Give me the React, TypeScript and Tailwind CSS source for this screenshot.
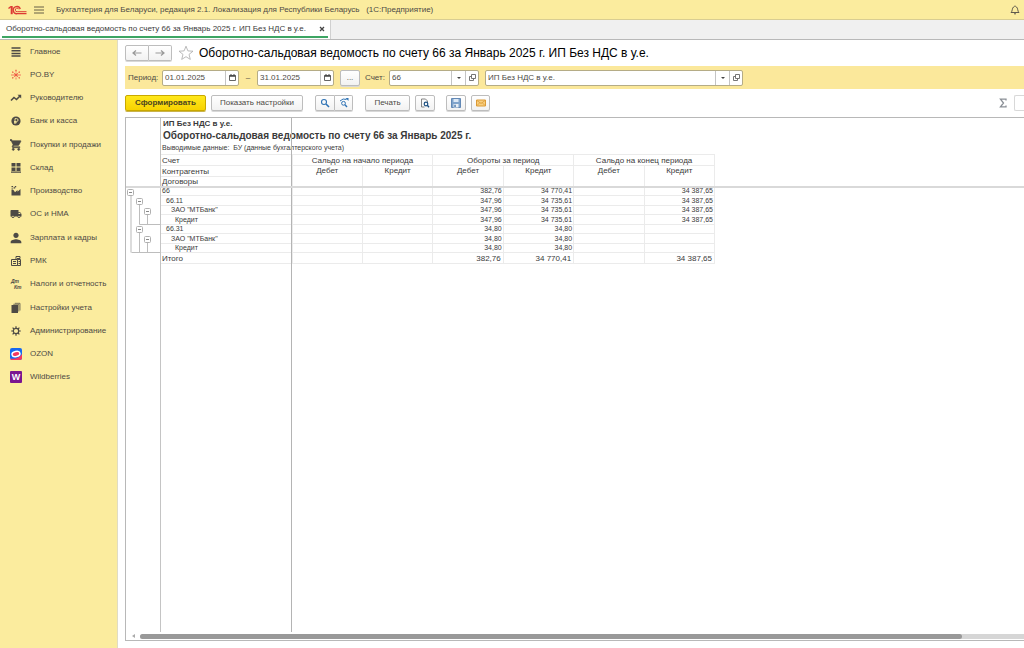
import { useState } from 'react';
import type { ReactNode } from 'react';
import { MdLocalShipping, MdPerson, MdShoppingCart } from 'react-icons/md';

interface Seccion {
  nombre: string;
  icono: ReactNode;
}

interface Fila {
  cuenta: string;
  sangria: string;
  valores: string[];
}

const secciones: Seccion[] = [
  {
    nombre: 'Главное',
    icono: (
      <svg viewBox="0 0 12 12" className="size-3">
        <path d="M1.500 2h9M1.500 4.700h9M1.500 7.400h9M1.500 10h9" stroke="#4d4a45" strokeWidth="1.500" />
      </svg>
    ),
  },
  {
    nombre: 'PO.BY',
    icono: (
      <svg viewBox="0 0 12 12" className="size-3">
        <path d="M6 3.500v-2M6 8.500v2M1 6h10M3.600 3.600l4.800 4.800M8.400 3.600L3.600 8.400" stroke="#f0705a" strokeWidth=".9" />
        <circle cx="6" cy="6" r="1.400" fill="#ee5a42" />
        <path d="M2 2.500h1.300v1.200H2zM8.700 2.500H10v1.200H8.700zM2 8.300h1.300v1.200H2zM8.700 8.300H10v1.200H8.700zM5.400.800h1.200V2H5.400z" fill="#ee5a42" />
      </svg>
    ),
  },
  {
    nombre: 'Руководителю',
    icono: (
      <svg viewBox="0 0 12 12" className="size-3" fill="none" stroke="#4d4a45">
        <path d="M1 8.500l3-3 2.500 2L10 4" strokeWidth="1.600" />
        <path d="M7.500 2.800h3.700v3.700z" fill="#4d4a45" stroke="none" />
      </svg>
    ),
  },
  {
    nombre: 'Банк и касса',
    icono: (
      <svg viewBox="0 0 12 12" className="size-3">
        <circle cx="6" cy="6" r="4.600" fill="#4d4a45" />
        <path d="M5 9V3.600h1.600a1.400 1.400 0 0 1 0 2.900H4M4 7.700h2.800" fill="none" stroke="#fbec9e" strokeWidth=".9" />
      </svg>
    ),
  },
  {
    nombre: 'Покупки и продажи',
    icono: <MdShoppingCart viewBox="1 1 22 22" className="size-3" stroke="#4d4a45" strokeWidth="1" />,
  },
  {
    nombre: 'Склад',
    icono: (
      <svg viewBox="0 0 12 12" className="size-3" fill="#4d4a45">
        <path d="M1.500 1h4v3.600h-4zM6.500 1h4v3.600h-4zM1.500 5.400h4V9h-4zM6.500 5.400h4V9h-4zM1 9.600h10v1.200H1z" />
      </svg>
    ),
  },
  {
    nombre: 'Производство',
    icono: (
      <svg viewBox="0 0 12 12" className="size-3" fill="#4d4a45">
        <path d="M1.500 10.500V5h2L5 7.200l2.500-2.200v1.800L10.500 4v6.500z" />
        <path d="M1.500 1h1.600v1.300H1.500zM3.600 2.300h1.600v1.300H3.600zM1.500 3.400h1.600v1H1.500zM4.800 1h1.400v1.200H4.800z" />
      </svg>
    ),
  },
  {
    nombre: 'ОС и НМА',
    icono: (
      <svg viewBox="0 0 24 24" className="size-3">
        <MdLocalShipping size={24} />
      </svg>
    ),
  },
  {
    nombre: 'Зарплата и кадры',
    icono: <MdPerson viewBox="3 3 18 18" className="size-3" />,
  },
  {
    nombre: 'РМК',
    icono: (
      <svg viewBox="0 0 12 12" className="size-3" fill="none" stroke="#4d4a45">
        <path d="M1.500 4.500h6v6h-6zM7.500 4.500h3v6h-3" />
        <path d="M3 6.500h3M3 8.500h3M6 4V1.500h4v2H7M8.500 6.500h1.500M8.500 8.500h1.500" />
      </svg>
    ),
  },
  {
    nombre: 'Налоги и отчетность',
    icono: (
      <svg viewBox="0 0 12 12" className="size-3" fill="#4d4a45" fontFamily="Liberation Sans, sans-serif" fontStyle="italic" fontWeight="bold" fontSize="5">
        <text x="1" y="5">Дт</text>
        <text x="4" y="11">Кт</text>
      </svg>
    ),
  },
  {
    nombre: 'Настройки учета',
    icono: (
      <svg viewBox="0 0 12 12" className="size-3" fill="#4d4a45">
        <path d="M1.500 3h6.500v8H1.500z" />
        <path d="M3.300 2.300h5.500V9.500M4.800 1.300h5.200V8.500" fill="none" stroke="#4d4a45" strokeWidth=".7" />
      </svg>
    ),
  },
  {
    nombre: 'Администрирование',
    icono: (
      <svg viewBox="0 0 12 12" className="size-3" fill="none" stroke="#4d4a45">
        <circle cx="6" cy="6" r="2.700" strokeWidth="1.200" />
        <path d="M6 1.200v2M6 8.800v2M1.200 6h2M8.800 6h2M2.600 2.600l1.400 1.400M8 8l1.400 1.400M2.600 9.400L4 8M8 4l1.400-1.400" strokeWidth="1.200" />
      </svg>
    ),
  },
  {
    nombre: 'OZON',
    icono: (
      <svg viewBox="0 0 12 12" className="size-3">
        <rect width="12" height="12" rx="2" fill="#1668f0" />
        <path d="M0 10.500Q8 12 12 6v4a2 2 0 0 1-2 2H2a2 2 0 0 1-2-1.500z" fill="#f5375f" />
        <ellipse cx="6" cy="6" rx="4" ry="2.600" fill="#f5375f" stroke="#fff" strokeWidth="1.500" transform="rotate(-12 6 6)" />
      </svg>
    ),
  },
  {
    nombre: 'Wildberries',
    icono: (
      <svg viewBox="0 0 12 12" className="size-3">
        <rect width="12" height="12" rx="1" fill="#7a1590" />
        <text x="6" y="9" textAnchor="middle" fill="#fff" fontFamily="Liberation Sans, sans-serif" fontWeight="bold" fontSize="9">W</text>
      </svg>
    ),
  },
];

const filas: Fila[] = [
  { cuenta: '66', sangria: 'pl-px', valores: ['', '', '382,76', '34 770,41', '', '34 387,65'] },
  { cuenta: '66.11', sangria: 'pl-[5px]', valores: ['', '', '347,96', '34 735,61', '', '34 387,65'] },
  { cuenta: 'ЗАО "МТБанк"', sangria: 'pl-[10px]', valores: ['', '', '347,96', '34 735,61', '', '34 387,65'] },
  { cuenta: 'Кредит', sangria: 'pl-[14px]', valores: ['', '', '347,96', '34 735,61', '', '34 387,65'] },
  { cuenta: '66.31', sangria: 'pl-[5px]', valores: ['', '', '34,80', '34,80', '', ''] },
  { cuenta: 'ЗАО "МТБанк"', sangria: 'pl-[10px]', valores: ['', '', '34,80', '34,80', '', ''] },
  { cuenta: 'Кредит', sangria: 'pl-[14px]', valores: ['', '', '34,80', '34,80', '', ''] },
];

const totales = ['', '', '382,76', '34 770,41', '', '34 387,65'];

const boton =
  'flex h-4 shrink-0 items-center justify-center rounded-xs border border-[#bdbdbd] bg-linear-to-b from-white to-[#f2f2f2] shadow-[0_1px_0_#d8d8d8]';
const campo = 'flex h-4 overflow-hidden rounded-xs border border-[#b5ac86] bg-white';
const botonCampo = 'flex shrink-0 items-center justify-center border-l border-[#c4c4c4]';

function Calendario() {
  return (
    <svg viewBox="0 0 7 7" className="size-[7px]" fill="none" stroke="#666">
      <path d="M.5 1.500h6v5h-6z" />
      <path d="M.5 2h6" strokeWidth="1.500" stroke="#444" />
      <path d="M2 0v1.500M5 0v1.500" stroke="#444" />
    </svg>
  );
}

function Abrir() {
  return (
    <svg viewBox="0 0 8 8" className="size-2" fill="none" stroke="#666" strokeWidth=".9">
      <path d="M3.500.5h4v4h-4zM3.500 2.500h-2v4h4v-2" />
    </svg>
  );
}

function CampoFecha({ etiqueta, inicial }: { etiqueta: string; inicial: string }) {
  const [valor, setValor] = useState(inicial);
  return (
    <div className={`${campo} w-[77px]`}>
      <input aria-label={etiqueta} value={valor} onChange={(e) => setValor(e.target.value)} className="min-w-0 flex-1 pl-0.5 outline-none" />
      <button aria-label="Выбрать дату" className={`${botonCampo} w-[13px]`}>
        <Calendario />
      </button>
    </div>
  );
}

function CampoLista({ id, etiqueta, inicial, ancho }: { id: string; etiqueta?: string; inicial: string; ancho: string }) {
  const [valor, setValor] = useState(inicial);
  return (
    <div className={`${campo} ${ancho}`}>
      <input id={id} aria-label={etiqueta} value={valor} onChange={(e) => setValor(e.target.value)} className="min-w-0 flex-1 pl-0.5 outline-none" />
      <button aria-label="Выбрать" className={`${botonCampo} w-3.5`}>
        <svg viewBox="0 0 4 2" className="h-0.5 w-1">
          <path d="M0 0h4L2 2z" fill="#444" />
        </svg>
      </button>
      <button aria-label="Открыть" className={`${botonCampo} w-[13px]`}>
        <Abrir />
      </button>
    </div>
  );
}

function Cabecera() {
  return (
    <header className="flex h-5 shrink-0 items-center border-b border-[#d8cd92] bg-[#fbec9e] pl-2 pr-1">
      <svg viewBox="0 0 20 10" className="h-2.5 w-5" fill="none" stroke="#dd3a33">
        <path d="M.5 3.500L3 1.500" strokeWidth="1.400" />
        <path d="M3.700 1v8.200" strokeWidth="2" />
        <path d="M12.300 4A3.600 3.600 0 1 0 9.300 8.700H18.500" strokeWidth="1.300" />
        <path d="M10.800 4.300A1.800 1.800 0 1 0 9.300 6.700H18.500" strokeWidth="1" />
      </svg>
      <button aria-label="Главное меню" className="ml-1.5">
        <svg viewBox="0 0 10 8" className="h-2 w-2.5">
          <path d="M0 1h10M0 4h10M0 7h10" stroke="#55503c" strokeWidth=".9" />
        </svg>
      </button>
      <p className="ml-3 flex-1 whitespace-pre">Бухгалтерия для Беларуси, редакция 2.1. Локализация для Республики Беларусь   (1С:Предприятие)</p>
      <button aria-label="Оповещения">
        <svg viewBox="0 0 10 10" className="size-2.5" fill="none" stroke="#4d4a45" strokeWidth=".9">
          <path d="M1 7.500C2.500 6.500 2 3 3.500 2 4 1.500 4.500 1.500 5 .8c.5.700 1 .7 1.500 1.200C8 3 7.500 6.500 9 7.500zM4 8.500q1 1.200 2 0" />
        </svg>
      </button>
    </header>
  );
}

function BarraInforme() {
  return (
    <div className="mt-1.5 flex h-4 items-center">
      <button className="h-4 w-[81px] shrink-0 rounded-xs border border-[#c9a800] bg-linear-to-b from-[#ffe81a] to-[#f7d200] font-bold text-[#4a4420] shadow-[0_1px_0_#c9b34a]">
        Сформировать
      </button>
      <button className={`${boton} ml-[5px] w-[92px]`}>Показать настройки</button>
      <div className="ml-3 flex">
        <button aria-label="Найти" className={`${boton} w-5 rounded-r-none`}>
          <svg viewBox="0 0 10 10" className="size-2.5" fill="none" stroke="#2f73b5">
            <circle cx="4" cy="4" r="2.500" strokeWidth="1.100" />
            <path d="M6 6l3 3" strokeWidth="1.600" />
          </svg>
        </button>
        <button aria-label="Найти далее" className={`${boton} w-[18px] rounded-l-none border-l-0`}>
          <svg viewBox="0 0 10 10" className="size-2.5" fill="none" stroke="#2f73b5">
            <circle cx="4.500" cy="5.300" r="1.900" />
            <path d="M6 6.800l2 2.200" strokeWidth="1.400" />
            <path d="M1 3Q4-.2 7.500 1.500" />
            <path d="M6.500 0H9.500v3z" fill="#2f73b5" stroke="none" />
          </svg>
        </button>
      </div>
      <button className={`${boton} ml-3 w-[45px]`}>Печать</button>
      <button aria-label="Предварительный просмотр" className={`${boton} ml-[5px] w-5`}>
        <svg viewBox="0 0 10 10" className="size-2.5" fill="none" stroke="#777">
          <path d="M7.500 4V3L5.500 1H1.500v8h3" strokeWidth=".9" />
          <circle cx="6" cy="6" r="1.800" stroke="#1c4f80" strokeWidth="1.200" />
          <path d="M7.300 7.300L9 9.300" stroke="#1c4f80" strokeWidth="1.400" />
        </svg>
      </button>
      <button aria-label="Сохранить" className={`${boton} ml-[11px] w-5`}>
        <svg viewBox="0 0 10 10" className="size-2.5">
          <path d="M.5.500h9v9h-9z" fill="#7fa3cb" stroke="#6288b5" />
          <path d="M2.500 1h5v3h-5z" fill="#dce8f5" />
          <path d="M2.500 6h5v3.500h-5z" fill="#e8eef5" />
          <path d="M3.300 6.800h1.500V9H3.300z" fill="#557fae" />
        </svg>
      </button>
      <button aria-label="Отправить" className={`${boton} ml-[5px] w-[19px]`}>
        <svg viewBox="0 0 10 10" className="size-2.5" stroke="#dc9a35">
          <path d="M.5 2h9v6h-9z" fill="#f8cf80" />
          <path d="M1 2.500l4 3 4-3M1 7.500l3-3M9 7.500l-3-3" fill="none" strokeWidth=".8" />
        </svg>
      </button>
      <button aria-label="Сумма" className="ml-auto">
        <svg viewBox="0 0 8 10" className="h-2.5 w-2" fill="none" stroke="#8a8f96" strokeWidth="1.300">
          <path d="M7 2.500V1.200H1.500L4.500 5 1.500 8.800H7V7.500" />
        </svg>
      </button>
      <input aria-label="Значение суммы" readOnly className="ml-[7px] h-4 w-2.5 rounded-l-xs border border-r-0 border-[#d8d8d8]" />
    </div>
  );
}

// дерево группировок слева от таблицы
function Grupos() {
  const nudos = [
    { x: 1, y: 2 },
    { x: 10, y: 11 },
    { x: 18, y: 21 },
    { x: 10, y: 39 },
    { x: 18, y: 49 },
  ];
  return (
    <svg viewBox="0 0 34 68" className="h-[68px] w-[34px]" fill="none" stroke="#bdbdbd">
      <path d="M5 8V65.500" strokeWidth="2" stroke="#dcdcdc" />
      <path d="M5.500 65.500H34M13.500 17V37.500H34M21.500 27v10.500M13.500 45v20.500M21.500 55v10.500" />
      {nudos.map((n) => (
        <g key={`${n.x}-${n.y}`}>
          <rect x={n.x + 0.5} y={n.y + 0.5} width="6" height="6" rx="1" fill="#fff" stroke="#b0b0b0" />
          <path d={`M${n.x + 2} ${n.y + 3.5}h3`} stroke="#888" />
        </g>
      ))}
    </svg>
  );
}

function Informe() {
  const celda = 'border border-[#ebebeb] p-0';
  return (
    <section className="relative mt-1.5 mb-[7px] flex min-h-0 flex-1 flex-col overflow-hidden border-y border-l border-[#b8b8b8]">
      <div className="flex min-h-0 flex-1">
        <div className="w-[34px] shrink-0 pt-[69px]">
          <Grupos />
        </div>
        <div className="relative min-w-0 flex-1 border-l border-[#c4c4c4] text-[#3a3a3a]">
          <p className="pl-0.5 text-[8px] leading-[11px] font-bold">ИП Без НДС в у.е.</p>
          <h2 className="pl-0.5 text-[10px] leading-[13px] font-bold">Оборотно-сальдовая ведомость по счету 66 за Январь 2025 г.</h2>
          <p className="pl-px text-[7px] leading-[12px] whitespace-pre">Выводимые данные:  БУ (данные бухгалтерского учета)</p>
          <table className="w-[554px] table-fixed border-collapse text-[8px] leading-[9px]">
            <colgroup>
              <col className="w-[131px]" />
              <col span={6} />
            </colgroup>
            <thead>
              <tr className="h-[11px]">
                <th className={`${celda} border-l-0 pl-px text-left font-normal`}>Счет</th>
                <th colSpan={2} className={`${celda} font-normal`}>Сальдо на начало периода</th>
                <th colSpan={2} className={`${celda} font-normal`}>Обороты за период</th>
                <th colSpan={2} className={`${celda} font-normal`}>Сальдо на конец периода</th>
              </tr>
              <tr className="h-[11px]">
                <th className={`${celda} border-l-0 pl-px text-left font-normal`}>Контрагенты</th>
                {['Дебет', 'Кредит', 'Дебет', 'Кредит', 'Дебет', 'Кредит'].map((t, i) => (
                  <th key={i} rowSpan={2} className={`${celda} align-top font-normal`}>{t}</th>
                ))}
              </tr>
              <tr className="h-[10px]">
                <th className={`${celda} border-l-0 pl-px text-left font-normal`}>Договоры</th>
              </tr>
            </thead>
            <tbody className="text-[7px] leading-[8px]">
              {filas.map((f, i) => (
                <tr key={i} className="odd:h-[9px] even:h-[10px]">
                  <td className={`${celda} border-l-0 ${f.sangria}`}>{f.cuenta}</td>
                  {f.valores.map((v, j) => (
                    <td key={j} className={`${celda} pr-px text-right`}>{v}</td>
                  ))}
                </tr>
              ))}
            </tbody>
            <tfoot>
              <tr className="h-[11px]">
                <td className={`${celda} border-l-0 pl-px`}>Итого</td>
                {totales.map((v, j) => (
                  <td key={j} className={`${celda} pr-0.5 text-right`}>{v}</td>
                ))}
              </tr>
            </tfoot>
          </table>
          <div className="absolute inset-y-0 left-[130px] w-px bg-[#b4b4b4]" />
        </div>
      </div>
      <div className="absolute inset-x-0 top-[68px] h-0.5 bg-[#d9d9d9]" />
      <div className="flex h-2 shrink-0 items-center pl-1.5">
        <svg viewBox="0 0 4 4" className="size-1">
          <path d="M3 0v4L0 2z" fill="#aaa" />
        </svg>
        <div className="ml-1 h-[5px] flex-1 rounded-l-full bg-[#d6d6d6]">
          <div className="h-full w-[93%] rounded-full bg-[#999]" />
        </div>
      </div>
    </section>
  );
}

function App() {
  return (
    <div className="flex h-screen flex-col overflow-hidden bg-white font-['Liberation_Sans',Arial,sans-serif] text-[8px] leading-[10px] text-[#4d4a45]">
      <Cabecera />
      <div className="flex h-5 shrink-0 border-b border-[#b8b8b8] bg-[#f0f0f0]">
        <div className="w-[331px] border-r border-[#d0d0d0] bg-white px-0.5">
          <div className="flex h-[18px] items-center justify-between border-b-2 border-[#3da563] pt-px pr-[3px] pl-1">
            <a href="#informe" className="text-[#3a3a3a]">Оборотно-сальдовая ведомость по счету 66 за Январь 2025 г. ИП Без НДС в у.е.</a>
            <button aria-label="Закрыть">
              <svg viewBox="0 0 6 6" className="size-1.5">
                <path d="M1 1l4 4M5 1L1 5" stroke="#444" strokeWidth="1.300" />
              </svg>
            </button>
          </div>
        </div>
      </div>
      <div className="flex min-h-0 flex-1">
        <nav className="w-[118px] shrink-0 border-r border-[#e0dcc4] bg-[#fbec9e]">
          <ul className="flex h-[349px] flex-col">
            {secciones.map((s) => (
              <li key={s.nombre} className="flex flex-1">
                <a href="#seccion" className="flex flex-1 items-center gap-2 pl-2.5 whitespace-nowrap">
                  {s.icono}
                  {s.nombre}
                </a>
              </li>
            ))}
          </ul>
        </nav>
        <main id="informe" className="flex min-w-0 flex-1 flex-col pl-[7px]">
          <div className="flex h-[26px] shrink-0 items-center pb-px">
            <div className="flex">
              <button aria-label="Назад" className={`${boton} w-6 rounded-r-none`}>
                <svg viewBox="0 0 10 8" className="h-2 w-2.5" fill="none" stroke="#999" strokeWidth="1.200">
                  <path d="M9.500 4H1M4 1.500L1 4l3 2.500" />
                </svg>
              </button>
              <button aria-label="Вперед" className={`${boton} w-[23px] rounded-l-none border-l-0`}>
                <svg viewBox="0 0 10 8" className="h-2 w-2.5" fill="none" stroke="#999" strokeWidth="1.200">
                  <path d="M.5 4H9M6 1.500L9 4 6 6.500" />
                </svg>
              </button>
            </div>
            <button aria-label="Добавить в избранное" className="ml-1.5">
              <svg viewBox="0 0 16 16" className="size-4" fill="none" stroke="#aaa" strokeWidth=".8">
                <path d="M8 1.200l1.900 4.700 5.100.3-4 3.200 1.300 5L8 11.700l-4.300 2.700 1.300-5-4-3.200 5.100-.3z" />
              </svg>
            </button>
            <h1 className="ml-[5px] truncate text-[12px] leading-4 text-black">Оборотно-сальдовая ведомость по счету 66 за Январь 2025 г. ИП Без НДС в у.е.</h1>
          </div>
          <div className="flex h-[23px] shrink-0 items-center bg-[#fbe89b] pl-[3px]">
            <span className="w-[34px]">Период:</span>
            <CampoFecha etiqueta="Начало периода" inicial="01.01.2025" />
            <span className="w-[18px] text-center">–</span>
            <CampoFecha etiqueta="Конец периода" inicial="31.01.2025" />
            <button className={`${boton} ml-1.5 w-5`}>...</button>
            <label htmlFor="cuenta" className="ml-[5px] w-6">Счет:</label>
            <CampoLista id="cuenta" inicial="66" ancho="w-[90px]" />
            <div className="w-1.5" />
            <CampoLista id="organizacion" etiqueta="Организация" inicial="ИП Без НДС в у.е." ancho="w-[258px]" />
          </div>
          <BarraInforme />
          <Informe />
        </main>
      </div>
    </div>
  );
}

export default App;
